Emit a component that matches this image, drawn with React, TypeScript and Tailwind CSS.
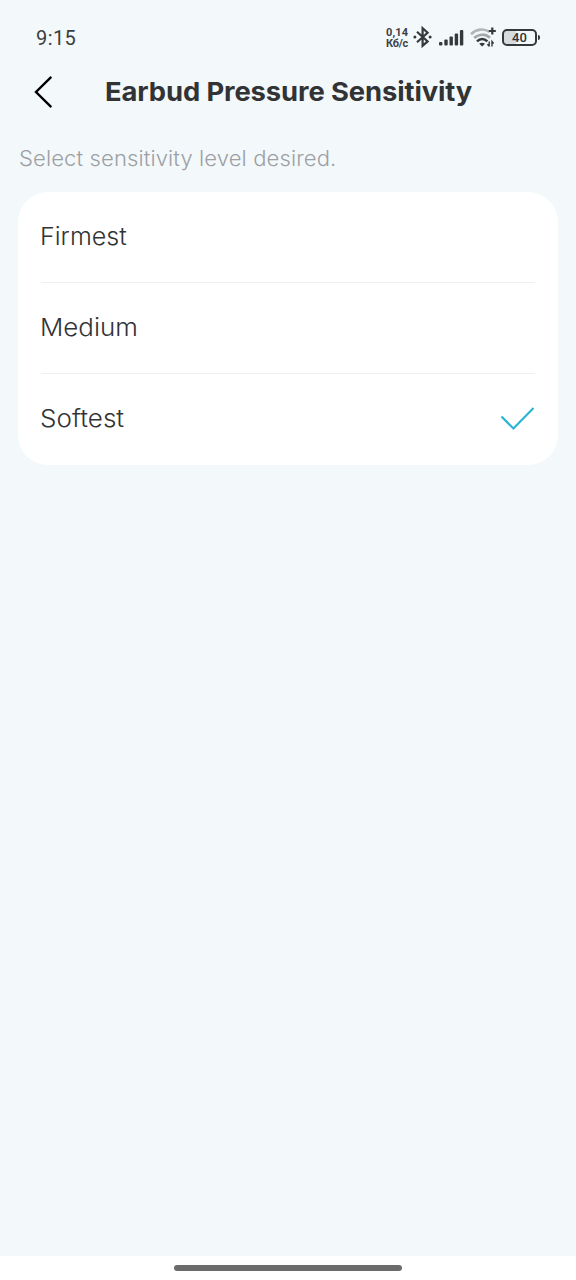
import React from "react";

const levels = [
  { name: "Firmest", stretch: "origin-left scale-x-[1.045]" },
  { name: "Medium", stretch: "origin-left scale-x-[1.08]" },
  { name: "Softest", stretch: "origin-left scale-x-[1.085]" },
];

function Bluetooth() {
  return (
    <svg className="ml-[5px] h-[22px] w-[20px] shrink-0" viewBox="0 0 20 22" fill="none" stroke="#36393c" strokeWidth="2.2">
      <path d="M4 5.7 14.6 15.4 9.6 19.8V2.2l5 4.6L4 16.3" />
      <circle cx="1.9" cy="11" r="1.5" fill="#36393c" stroke="none" />
      <circle cx="17.1" cy="11" r="1.5" fill="#36393c" stroke="none" />
    </svg>
  );
}

function Signal() {
  return (
    <svg className="ml-[6px] h-[18px] w-[25px] shrink-0" viewBox="0 0 25 18" fill="#36393c">
      <rect x="0" y="14" width="3.4" height="3.5" rx="1" />
      <rect x="5.3" y="11.5" width="3.4" height="6" rx="1" />
      <rect x="10.5" y="8.5" width="3.4" height="9" rx="1" />
      <rect x="15.7" y="5.5" width="3.4" height="12" rx="1" />
      <rect x="20.9" y="2" width="3.4" height="15.5" rx="1" />
    </svg>
  );
}

function Wifi() {
  return (
    <svg className="ml-[6px] h-[22px] w-[27px] shrink-0" viewBox="0 0 27 22" fill="none">
      <path d="M1 8.2C6.5 2.8 14 2.2 19.6 6" stroke="#b4b7ba" strokeWidth="2.6" />
      <path d="M4.2 12C9 7.6 15.5 7.6 20 11.8" stroke="#a5a8ab" strokeWidth="2.6" />
      <path d="M7 15.4C10.2 12.4 14.2 12.4 17.4 15.4" stroke="#36393c" strokeWidth="2.6" />
      <path d="M9.2 17.8Q12.2 15.6 15 17.8L12.1 20.6Z" fill="#36393c" />
      <path d="M22.3 1.5v7M18.8 5h7" stroke="#36393c" strokeWidth="2.2" />
      <path d="M19.2 15.5v5M17.4 18.3l1.8 2M22 20.5v-5l1.6 2" stroke="#36393c" strokeWidth="1.4" />
    </svg>
  );
}

export default function App() {
  return (
    <div className="flex h-[1280px] w-[576px] flex-col overflow-hidden bg-[#f3f8fb] font-['Inter',sans-serif] text-[#323335]">
      <div className="flex h-[60px] shrink-0 items-center pt-[15px] pr-[36px] pb-px pl-[36px]">
        <span className="pt-[2px] font-['Roboto',sans-serif] text-[20px] leading-6 font-normal tracking-[0.4px] text-[#3b3e41]">9:15</span>
        <div className="ml-auto flex items-center">
          <div className="w-[22px] pt-px font-['Roboto',sans-serif] text-[11px] leading-[11px] font-bold whitespace-nowrap text-[#3d4043]">
            <div className="tracking-[0.15px]">0,14</div>
            <div className="tracking-[-0.25px]">Кб/с</div>
          </div>
          <Bluetooth />
          <Signal />
          <Wifi />
          <div className="ml-[5px] flex items-center gap-px">
            <div className="flex h-[17px] w-[35px] items-center justify-center rounded-[5px] border-2 border-[#36393c] bg-linear-to-r from-[#d8dbde] from-40% to-[#f3f8fb] to-40% pt-px font-['Roboto',sans-serif] text-[13px] leading-none font-medium text-[#303336]">
              40
            </div>
            <div className="h-[5px] w-[2px] rounded-r-sm bg-[#36393c]" />
          </div>
        </div>
      </div>

      <header className="flex h-[64px] shrink-0 items-center pl-[33px]">
        <svg className="h-[34px] w-[21px] shrink-0" viewBox="0 0 21 34" fill="none" stroke="#000" strokeWidth="2.4">
          <path d="M18.3 1.8 3 17 18.3 32.2" />
        </svg>
        <h1 className="ml-[51px] origin-left scale-x-[1.053] text-[26px] leading-8 font-bold tracking-[-0.1px] whitespace-nowrap">
          Earbud Pressure Sensitivity
        </h1>
      </header>

      <main className="grow px-[18px] pt-[20px]">
        <p className="h-[48px] origin-left scale-x-[1.05] pl-px text-[21px] leading-[29px] font-light tracking-[0.1px] whitespace-nowrap text-[#9ca0a4]">
          Select sensitivity level desired.
        </p>
        <ul className="h-[273px] rounded-[30px] bg-white px-[23px]">
          {levels.map((level, i) => (
            <li
              key={level.name}
              className={
                i < 2
                  ? "flex h-[91px] items-center justify-between border-b border-[#eeeff0]"
                  : "flex h-[90px] items-center justify-between"
              }
            >
              <span className={`-ml-px text-[24px] leading-8 font-light ${level.stretch}`}>{level.name}</span>
              {i === 2 && (
                <svg className="h-[26px] w-[35px]" viewBox="0 0 35 26" fill="none" stroke="#2cb5d3" strokeWidth="2.2">
                  <path d="M1.5 10.5 13.4 22.5 33.5 2" />
                </svg>
              )}
            </li>
          ))}
        </ul>
      </main>

      <footer className="flex h-[24px] shrink-0 justify-center bg-white pt-[9px]">
        <div className="h-[6px] w-[228px] rounded-full bg-[#6b6b6b]" />
      </footer>
    </div>
  );
}
